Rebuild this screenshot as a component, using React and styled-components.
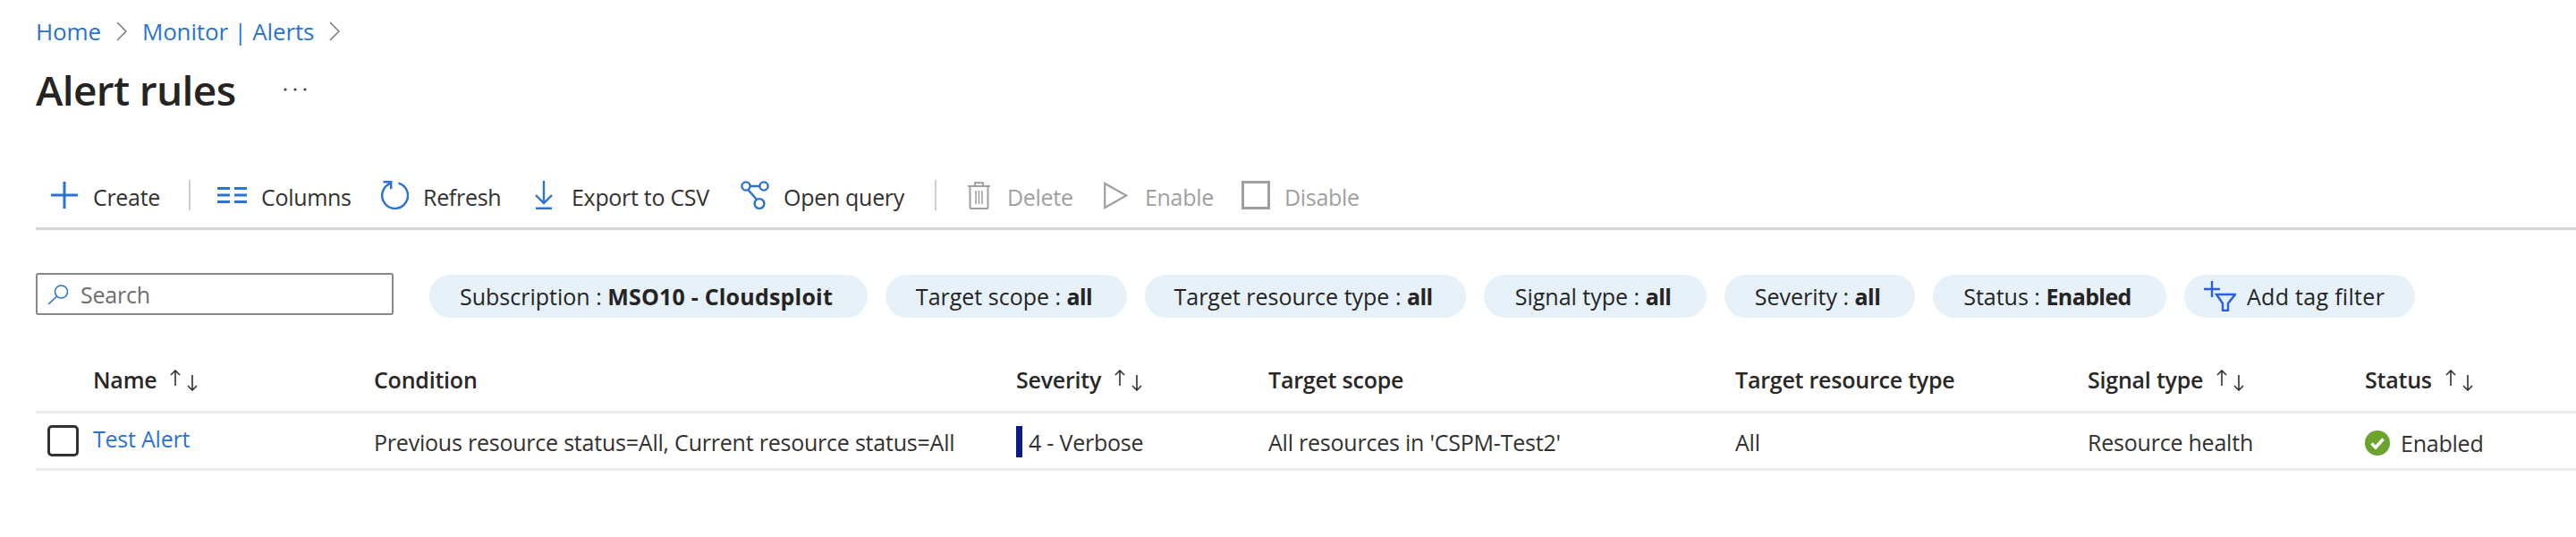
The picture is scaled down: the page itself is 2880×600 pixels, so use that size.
import styled, { createGlobalStyle } from 'styled-components';

const GlobalStyle = createGlobalStyle`
  html, body {
    margin: 0;
    background: #fff;
    color: #323130;
    font-family: 'Open Sans', 'Noto Sans', 'Liberation Sans', sans-serif;
    font-size: 25px;
  }
`;

const Page = styled.div`
  padding-left: 40px;
  height: 600px;
  overflow: hidden;
`;

const Breadcrumb = styled.nav`
  display: flex;
  align-items: center;
  height: 70px;
  gap: 17px;
  color: #2b73d2;
  font-size: 26px;
  letter-spacing: -0.15px;
`;

const Chevron = styled.svg`
  width: 12px;
  height: 22px;
  fill: none;
  stroke: #777;
  stroke-width: 1.5;
`;

const TitleRow = styled.div`
  display: flex;
  align-items: center;
  height: 60px;
`;

const Title = styled.h1`
  margin: 0;
  width: 277px;
  font-size: 46px;
  font-weight: 600;
  letter-spacing: -0.65px;
  color: #252423;
`;

const Toolbar = styled.div`
  display: flex;
  align-items: center;
  height: 40px;
  margin-top: 68px;
  padding: 0 0 16px 17px;
  border-bottom: 3px solid #d6d6d6;
`;

const ToolButton = styled.div`
  display: flex;
  align-items: center;
  flex: none;
  width: ${(p) => p.$w}px;
  color: ${(p) => (p.$disabled ? '#a0a0a0' : '#323130')};
  letter-spacing: -0.3px;
`;

const ToolLabel = styled.span`
  padding-top: 3px;
`;

const IconSlot = styled.span`
  display: flex;
  align-items: center;
  flex: none;
  width: ${(p) => p.$w}px;
`;

const ToolSep = styled.div`
  flex: none;
  width: ${(p) => p.$w}px;
  height: 34px;
  box-sizing: border-box;
  background: linear-gradient(#cfcfcf, #cfcfcf) left / 2px 100% no-repeat;
`;

const FilterRow = styled.div`
  display: flex;
  align-items: flex-start;
  margin-top: 48px;
  height: 50px;
`;

const SearchBox = styled.div`
  display: flex;
  align-items: center;
  gap: 13px;
  box-sizing: border-box;
  width: 400px;
  height: 47px;
  margin-right: 40px;
  padding-left: 11px;
  border: 2px solid #8a8886;
  border-radius: 3px;
  color: #6f6e6c;
  letter-spacing: -0.22px;
`;

const Pills = styled.div`
  display: flex;
  gap: 20px;
  margin-top: 2px;
`;

const Pill = styled.div`
  display: flex;
  align-items: center;
  justify-content: center;
  box-sizing: border-box;
  width: ${(p) => p.$w}px;
  height: 48px;
  padding-right: 5px;
  border-radius: 24px;
  background: #e6f1fa;
  color: #252423;
  letter-spacing: 0;
  white-space: pre;

  b {
    font-weight: 700;
    letter-spacing: ${(p) => p.$boldSpacing ?? -0.6}px;
  }
`;

const TagPill = styled(Pill)`
  justify-content: flex-start;
  gap: 12px;
  padding: 0 0 0 22px;
  letter-spacing: 0.3px;
`;

const TableRow = styled.div`
  display: grid;
  grid-template-columns: 64px 314px 718px 282px 522px 394px 310px 1fr;
  align-items: center;
  box-sizing: border-box;
  height: ${(p) => p.$h}px;
  border-bottom: 3px solid #eeeeee;
  letter-spacing: -0.22px;
`;

const HeaderRow = styled(TableRow)`
  margin-top: 36px;
  font-weight: 600;
  color: #292827;
`;

const HeadCell = styled.div`
  display: flex;
  align-items: center;
  gap: 15px;
`;

const HeadLabel = styled.span`
  padding-bottom: 3px;
`;

const Cell = styled.div`
  display: flex;
  align-items: center;
  white-space: nowrap;
  padding-top: ${(p) => p.$top ?? 2}px;
`;

const Checkbox = styled.div`
  box-sizing: border-box;
  width: 35px;
  height: 35px;
  margin-left: 13px;
  border: 3px solid #323130;
  border-radius: 5px;
`;

const NameLink = styled.a`
  color: #2b73d2;
  margin-top: -8px;
`;

const SeverityBar = styled.span`
  width: 7px;
  height: 35px;
  margin-right: 7px;
  background: #0a1a8a;
`;

const StatusIcon = styled.svg`
  width: 28px;
  height: 28px;
  margin-right: 12px;
`;

const blue = '#2b73d2';

function Line(props) {
  return <svg fill="none" stroke={blue} strokeWidth="3" {...props} />;
}

function SortArrows() {
  return (
    <svg width="32" height="24" viewBox="0 0 32 24" fill="none" stroke="#323130" strokeWidth="1.6">
      <path d="M6 18V1M1 6l5-5 5 5M25 6v17M20 18l5 5 5-5" />
    </svg>
  );
}

function Crumb() {
  return (
    <Chevron viewBox="0 0 12 22">
      <path d="M1 1l10 10L1 21" />
    </Chevron>
  );
}

const columns = [
  ['Name', true],
  ['Condition'],
  ['Severity', true],
  ['Target scope'],
  ['Target resource type'],
  ['Signal type', true],
  ['Status', true],
];

export default function App() {
  return (
    <Page>
      <GlobalStyle />
      <Breadcrumb>
        <span>Home</span>
        <Crumb />
        <span>Monitor | Alerts</span>
        <Crumb />
      </Breadcrumb>
      <TitleRow>
        <Title>Alert rules</Title>
        <svg width="26" height="6" viewBox="0 0 26 6" fill="#444">
          <circle cx="2" cy="3" r="1.6" />
          <circle cx="13" cy="3" r="1.6" />
          <circle cx="24" cy="3" r="1.6" />
        </svg>
      </TitleRow>
      <Toolbar>
        <ToolButton $w={154}>
          <IconSlot $w={47}>
            <Line width="30" height="30" viewBox="0 0 30 30">
              <path d="M15 0v30M0 15h30" />
            </Line>
          </IconSlot>
          <ToolLabel>Create</ToolLabel>
        </ToolButton>
        <ToolSep $w={32} />
        <ToolButton $w={182}>
          <IconSlot $w={49}>
            <Line width="33" height="18" viewBox="0 0 33 18">
              <path d="M0 1.5h14M19 1.5h14M0 9h14M19 9h14M0 16.5h14M19 16.5h14" />
            </Line>
          </IconSlot>
          <ToolLabel>Columns</ToolLabel>
        </ToolButton>
        <ToolButton $w={173}>
          <IconSlot $w={48}>
            <Line width="32" height="32" viewBox="0 0 32 32" strokeWidth="2.4">
              <path d="M11 3.2A14.4 14.4 0 1 0 20.5 2.6M3.5 1.2h8.7v8" />
            </Line>
          </IconSlot>
          <ToolLabel>Refresh</ToolLabel>
        </ToolButton>
        <ToolButton $w={230}>
          <IconSlot $w={41}>
            <Line width="20" height="32" viewBox="0 0 20 32" strokeWidth="2.4">
              <path d="M10 0v25M1 16l9 9 9-9" />
              <path d="M1 31h18" strokeWidth="3" />
            </Line>
          </IconSlot>
          <ToolLabel>Export to CSV</ToolLabel>
        </ToolButton>
        <ToolButton $w={217}>
          <IconSlot $w={48}>
            <Line width="32" height="32" viewBox="0 0 32 32" strokeWidth="2.4">
              <circle cx="6" cy="6" r="4.6" />
              <circle cx="26" cy="6" r="4.6" />
              <circle cx="21" cy="25.5" r="5.4" />
              <path d="M10.6 6h10.8M8.4 10l9.6 11" />
            </Line>
          </IconSlot>
          <ToolLabel>Open query</ToolLabel>
        </ToolButton>
        <ToolSep $w={37} />
        <ToolButton $w={152} $disabled>
          <IconSlot $w={44}>
            <svg width="25" height="31" viewBox="0 0 25 31" fill="none" stroke="#a0a0a0" strokeWidth="2">
              <path d="M0 5h25M8 5V1.2h9V5M2.5 5v23.5a1.5 1.5 0 0 0 1.5 1.5h17a1.5 1.5 0 0 0 1.5-1.5V5" />
              <path d="M9 10v15M12.5 10v15M16 10v15" strokeWidth="1.5" />
            </svg>
          </IconSlot>
          <ToolLabel>Delete</ToolLabel>
        </ToolButton>
        <ToolButton $w={154} $disabled>
          <IconSlot $w={46}>
            <svg width="27" height="31" viewBox="0 0 27 31" fill="none" stroke="#a0a0a0" strokeWidth="2.2">
              <path d="M1.2 2v27l24-13.5z" />
            </svg>
          </IconSlot>
          <ToolLabel>Enable</ToolLabel>
        </ToolButton>
        <ToolButton $w={140} $disabled>
          <IconSlot $w={48}>
            <svg width="32" height="32" viewBox="0 0 32 32" fill="none" stroke="#a0a0a0" strokeWidth="3">
              <rect x="1.5" y="1.5" width="29" height="29" />
            </svg>
          </IconSlot>
          <ToolLabel>Disable</ToolLabel>
        </ToolButton>
      </Toolbar>
      <FilterRow>
        <SearchBox>
          <svg width="24" height="22" viewBox="0 0 24 22" fill="none" stroke={blue} strokeWidth="1.6">
            <circle cx="15.5" cy="8" r="7" />
            <path d="M10.5 13L1 22" />
          </svg>
          Search
        </SearchBox>
        <Pills>
          <Pill $w={490} $boldSpacing={0.2}><span>Subscription : <b>MSO10 - Cloudsploit</b></span></Pill>
          <Pill $w={270}><span>Target scope : <b>all</b></span></Pill>
          <Pill $w={359}><span>Target resource type : <b>all</b></span></Pill>
          <Pill $w={249}><span>Signal type : <b>all</b></span></Pill>
          <Pill $w={213}><span>Severity : <b>all</b></span></Pill>
          <Pill $w={261}><span>Status : <b>Enabled</b></span></Pill>
          <TagPill $w={258}>
            <svg width="36" height="34" viewBox="0 0 36 34" fill="none" stroke="#2b5fd9" strokeWidth="2.4">
              <path d="M9 0v18M0 9h18M14 15h21l-8 10v8h-6v-8z" />
            </svg>
            <span>Add tag filter</span>
          </TagPill>
        </Pills>
      </FilterRow>
      <HeaderRow $h={71}>
        <div />
        {columns.map(([label, sortable]) => (
          <HeadCell key={label}>
            <HeadLabel>{label}</HeadLabel>
            {sortable && <SortArrows />}
          </HeadCell>
        ))}
      </HeaderRow>
      <TableRow $h={64}>
        <Checkbox />
        <Cell>
          <NameLink>Test Alert</NameLink>
        </Cell>
        <Cell>Previous resource status=All, Current resource status=All</Cell>
        <Cell>
          <SeverityBar />4 - Verbose
        </Cell>
        <Cell>All resources in 'CSPM-Test2'</Cell>
        <Cell>All</Cell>
        <Cell>Resource health</Cell>
        <Cell $top={5}>
          <StatusIcon viewBox="0 0 28 28">
            <circle cx="14" cy="14" r="14" fill="#6ba32d" />
            <path d="M7.5 14.5l4.5 4.5 8.5-9.5" fill="none" stroke="#fff" strokeWidth="3.4" />
          </StatusIcon>
          Enabled
        </Cell>
      </TableRow>
    </Page>
  );
}
